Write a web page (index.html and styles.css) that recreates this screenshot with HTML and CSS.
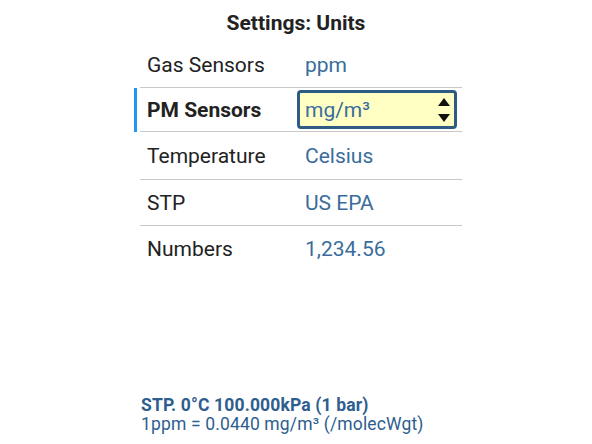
FILE: index.html
```html
<!DOCTYPE html>
<html>
<head>
<meta charset="utf-8">
<link rel="stylesheet" href="styles.css">
</head>
<body>
<div class="page">
  <h1 class="title">Settings: Units</h1>
  <div class="list">
    <div class="row first">
      <span class="mark"></span>
      <div class="cell"><span class="label">Gas Sensors</span><span class="value">ppm</span></div>
    </div>
    <div class="row active">
      <span class="mark"></span>
      <div class="cell">
        <span class="label">PM Sensors</span>
        <div class="select">
          <span class="select-text">mg/m³</span>
          <svg class="spin" width="14" height="30" viewBox="0 0 14 30">
            <path d="M1 11 L7 3 L13 11 Z" fill="#111"/>
            <path d="M1 19 L13 19 L7 27 Z" fill="#111"/>
          </svg>
        </div>
      </div>
    </div>
    <div class="row">
      <span class="mark"></span>
      <div class="cell"><span class="label">Temperature</span><span class="value">Celsius</span></div>
    </div>
    <div class="row">
      <span class="mark"></span>
      <div class="cell"><span class="label">STP</span><span class="value">US EPA</span></div>
    </div>
    <div class="row">
      <span class="mark"></span>
      <div class="cell"><span class="label">Numbers</span><span class="value">1,234.56</span></div>
    </div>
  </div>
  <div class="footer">
    <div class="foot-bold">STP. 0°C 100.000kPa (1 bar)</div>
    <div class="foot-line">1ppm = 0.0440 mg/m³ (/molecWgt)</div>
  </div>
</div>
</body>
</html>
```

FILE: styles.css
```css
html, body {
  margin: 0;
  padding: 0;
  background: #ffffff;
}
body {
  font-family: Roboto, "Noto Sans", sans-serif;
  color: #222222;
}
.page {
  height: 444px;
  display: flex;
  flex-direction: column;
}
.title {
  margin: 0;
  height: 41px;
  line-height: 46px;
  font-size: 21px;
  font-weight: 700;
  text-align: center;
  color: #222;
}
.list {
  margin-left: 134px;
  width: 328px;
  display: flex;
  flex-direction: column;
}
.row {
  display: flex;
  height: 46px;
}
.mark {
  width: 3px;
  margin-right: 3px;
  flex: none;
}
.row.active .mark {
  background: #2196f3;
  margin-top: 1px;
  margin-bottom: 1px;
}
.cell {
  flex: 1;
  display: flex;
  align-items: center;
  border-top: 1px solid #c8c8c8;
  padding-left: 7px;
  font-size: 21px;
}
.row.first .cell {
  border-top-color: transparent;
}
.row.active .cell {
  border-bottom: 1px solid #c8c8c8;
  height: 45px;
  box-sizing: border-box;
}
.row.active + .row .cell {
  border-top: none;
}
.label {
  width: 158px;
  flex: none;
}
.row.active .label {
  font-weight: 700;
  width: 150px;
}
.value {
  color: #3a6d9c;
}
.select {
  width: 160px;
  height: 39px;
  box-sizing: border-box;
  border: 3px solid #2d5b84;
  border-radius: 4px;
  background: #ffffc4;
  display: flex;
  align-items: center;
  justify-content: space-between;
  padding-left: 5px;
  padding-right: 3px;
}
.select-text {
  color: #3a6d9c;
}
.spin {
  display: block;
}
.footer {
  margin-top: auto;
  margin-left: 141px;
  padding-bottom: 10px;
  color: #2d5e8f;
  font-size: 17.5px;
  line-height: 19px;
  letter-spacing: 0.15px;
}
.foot-bold {
  font-weight: 700;
}
```
